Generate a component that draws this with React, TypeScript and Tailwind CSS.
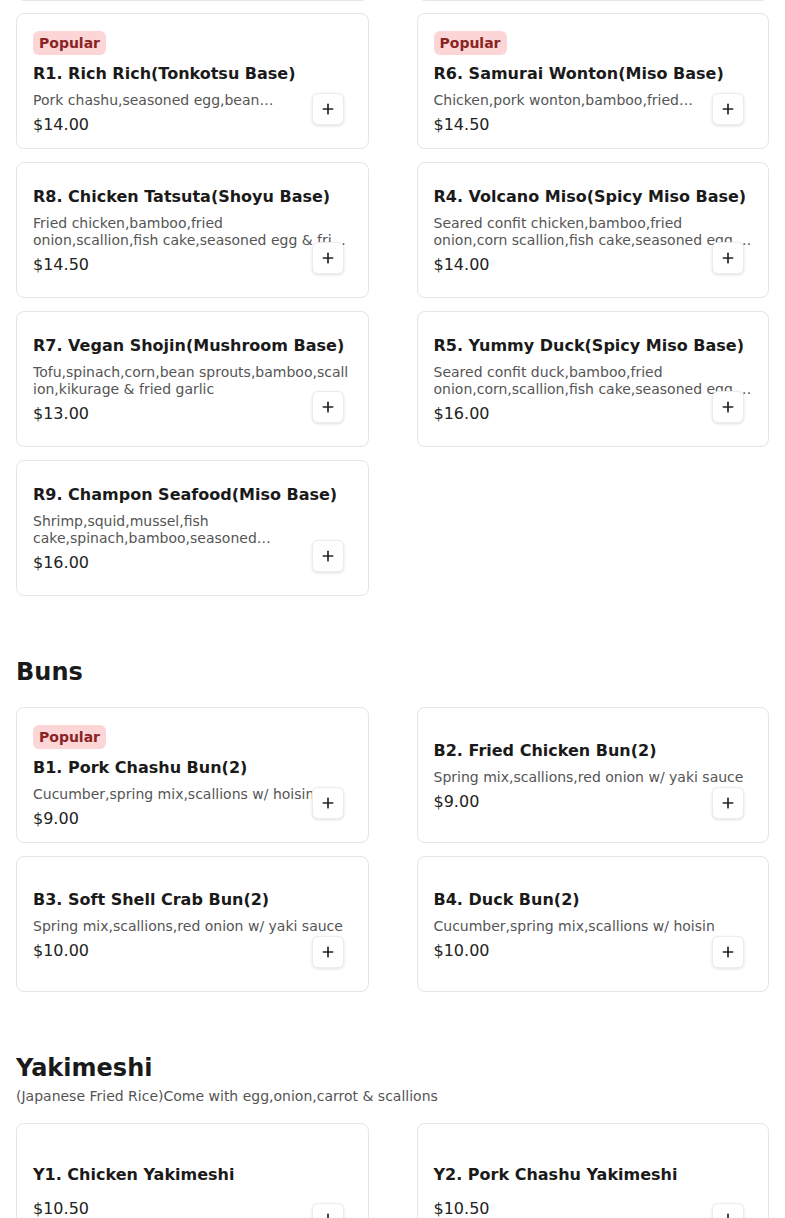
import React from "react";
import { Plus } from "lucide-react";

type Item = {
  name: string;
  desc: string;
  price: string;
  popular?: boolean;
};

const hiddenRow: Item[] = [
  { name: "R2. Spicy Tonkotsu", desc: "Pork chashu,seasoned egg,bean sprouts,bamboo", price: "$14.50" },
  { name: "R3. Shoyu Chicken", desc: "Chicken,bamboo,fried onion,scallion,fish cake", price: "$14.00" },
];

const ramen: Item[] = [
  {
    name: "R1. Rich Rich(Tonkotsu Base)",
    desc: "Pork chashu,seasoned egg,bean sprouts,corn,bamboo,fried onion,scallion & fish cake",
    price: "$14.00",
    popular: true,
  },
  {
    name: "R6. Samurai Wonton(Miso Base)",
    desc: "Chicken,pork wonton,bamboo,fried onion,scallion,fish cake,seasoned egg & fried garlic",
    price: "$14.50",
    popular: true,
  },
  {
    name: "R8. Chicken Tatsuta(Shoyu Base)",
    desc: "Fried chicken,bamboo,fried onion,scallion,fish cake,seasoned egg & fried garlic",
    price: "$14.50",
  },
  {
    name: "R4. Volcano Miso(Spicy Miso Base)",
    desc: "Seared confit chicken,bamboo,fried onion,corn scallion,fish cake,seasoned egg & fried garlic",
    price: "$14.00",
  },
  {
    name: "R7. Vegan Shojin(Mushroom Base)",
    desc: "Tofu,spinach,corn,bean sprouts,bamboo,scall\u200Bion,kikurage & fried garlic",
    price: "$13.00",
  },
  {
    name: "R5. Yummy Duck(Spicy Miso Base)",
    desc: "Seared confit duck,bamboo,fried onion,corn,scallion,fish cake,seasoned egg & fried garlic",
    price: "$16.00",
  },
  {
    name: "R9. Champon Seafood(Miso Base)",
    desc: "Shrimp,squid,mussel,fish cake,spinach,bamboo,seasoned egg,corn,scallion & fried onion",
    price: "$16.00",
  },
];

const buns: Item[] = [
  { name: "B1. Pork Chashu Bun(2)", desc: "Cucumber,spring mix,scallions w/ hoisin", price: "$9.00", popular: true },
  { name: "B2. Fried Chicken Bun(2)", desc: "Spring mix,scallions,red onion w/ yaki sauce", price: "$9.00" },
  { name: "B3. Soft Shell Crab Bun(2)", desc: "Spring mix,scallions,red onion w/ yaki sauce", price: "$10.00" },
  { name: "B4. Duck Bun(2)", desc: "Cucumber,spring mix,scallions w/ hoisin", price: "$10.00" },
];

const yakimeshi: Item[] = [
  { name: "Y1. Chicken Yakimeshi", desc: "", price: "$10.50" },
  { name: "Y2. Pork Chashu Yakimeshi", desc: "", price: "$10.50" },
];

const MenuCard: React.FC<{ item: Item }> = ({ item }) => (
  <div className="relative flex h-[136px] flex-col rounded-lg border border-[#e5e5e5] bg-white px-4 pt-[17px] pb-[15px] [justify-content:safe_center]">
    {item.popular && (
      <span className="mb-[7px] h-6 shrink-0 self-start rounded-md bg-[#fcd6d6] px-1.5 text-sm font-bold leading-6 text-[#8a2424]">
        Popular
      </span>
    )}
    <h3 className="shrink-0 text-base font-bold leading-6 text-[#1a1a1a]">{item.name}</h3>
    <p
      className={
        "mt-1.5 shrink-0 text-sm leading-[17px] text-[#555] " +
        (item.popular ? "line-clamp-1" : "line-clamp-2")
      }
    >
      {item.desc}
    </p>
    <p className="mt-1 shrink-0 text-base leading-6 text-[#222]">{item.price}</p>
    <button className="absolute bottom-[23px] right-6 flex h-8 w-8 items-center justify-center rounded-md border border-[#ececec] bg-white shadow-[0_1px_3px_rgba(0,0,0,0.12)]">
      <Plus size={16} strokeWidth={2.5} className="text-[#222]" />
    </button>
  </div>
);

const Grid: React.FC<{ items: Item[]; className?: string }> = ({ items, className }) => (
  <div className={"grid grid-cols-2 gap-x-12 gap-y-[13px] " + (className ?? "")}>
    {items.map((item) => (
      <MenuCard key={item.name} item={item} />
    ))}
  </div>
);

export default function App() {
  return (
    <div className="min-h-screen overflow-hidden bg-white px-4 pb-10 font-['DejaVu_Sans',sans-serif]">
      {/* row scrolled off the top */}
      <Grid items={hiddenRow} className="mt-[-135px]" />

      <Grid items={ramen} className="mt-3" />

      <section className="mt-[60px]">
        <h2 className="text-2xl font-bold leading-8 text-[#1a1a1a]">Buns</h2>
        <Grid items={buns} className="mt-[19px]" />
      </section>

      <section className="mt-[60px]">
        <h2 className="text-2xl font-bold leading-8 text-[#1a1a1a]">Yakimeshi</h2>
        <p className="mt-0.5 text-sm leading-5 text-[#555]">
          (Japanese Fried Rice)Come with egg,onion,carrot &amp; scallions
        </p>
        <Grid items={yakimeshi} className="mt-[17px]" />
      </section>
    </div>
  );
}
